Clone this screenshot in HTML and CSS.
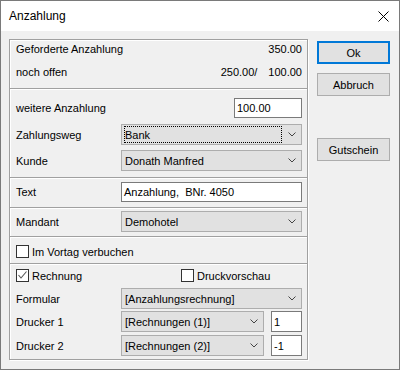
FILE: index.html
```html
<!DOCTYPE html>
<html lang="de">
<head>
    <meta charset="UTF-8">
    <title>Anzahlung</title>
    <link rel="stylesheet" href="styles.css">
</head>
<body>
    <div class="window">
        <div class="titlebar">
            <span class="title">Anzahlung</span>
            <svg class="close" width="11" height="11" viewBox="0 0 11 11">
                <path d="M0.5 0.5 L10.5 10.5 M10.5 0.5 L0.5 10.5" stroke="#000" stroke-width="1" fill="none"/>
            </svg>
        </div>
        <div class="body">
            <div class="group">
                <div class="section s-summary">
                    <div class="row r-info">
                        <span>Geforderte Anzahlung</span>
                        <span class="amount">350.00</span>
                    </div>
                    <div class="row r-info">
                        <span>noch offen</span>
                        <span class="amounts"><span>250.00/</span><span>100.00</span></span>
                    </div>
                </div>
                <div class="section s-payment">
                    <div class="row r-input">
                        <span class="label">weitere Anzahlung</span>
                        <div class="field field-amount">100.00</div>
                    </div>
                    <div class="row r-combo">
                        <span class="label">Zahlungsweg</span>
                        <div class="combo">
                            <span class="focus">Bank</span>
                            <svg class="chevron" width="8" height="5" viewBox="0 0 8 5"><polyline points="0.5,0.5 4,4 7.5,0.5" fill="none" stroke="#444" stroke-width="1"/></svg>
                        </div>
                    </div>
                    <div class="row r-combo">
                        <span class="label">Kunde</span>
                        <div class="combo">
                            <span>Donath Manfred</span>
                            <svg class="chevron" width="8" height="5" viewBox="0 0 8 5"><polyline points="0.5,0.5 4,4 7.5,0.5" fill="none" stroke="#444" stroke-width="1"/></svg>
                        </div>
                    </div>
                </div>
                <div class="section s-text">
                    <div class="row r-input">
                        <span class="label">Text</span>
                        <div class="field field-wide">Anzahlung,&nbsp; BNr. 4050</div>
                    </div>
                </div>
                <div class="section s-mandant">
                    <div class="row r-combo">
                        <span class="label">Mandant</span>
                        <div class="combo">
                            <span>Demohotel</span>
                            <svg class="chevron" width="8" height="5" viewBox="0 0 8 5"><polyline points="0.5,0.5 4,4 7.5,0.5" fill="none" stroke="#444" stroke-width="1"/></svg>
                        </div>
                    </div>
                </div>
                <div class="section s-vortag">
                    <div class="row r-check">
                        <span class="checkbox"></span>
                        <span>Im Vortag verbuchen</span>
                    </div>
                </div>
                <div class="section s-print">
                    <div class="row r-check">
                        <div class="check-item check-first">
                            <span class="checkbox">
                                <svg width="11" height="11" viewBox="0 0 11 11"><polyline points="1.5,5 4,8 9.5,1.5" fill="none" stroke="#555" stroke-width="1.1"/></svg>
                            </span>
                            <span>Rechnung</span>
                        </div>
                        <div class="check-item">
                            <span class="checkbox"></span>
                            <span>Druckvorschau</span>
                        </div>
                    </div>
                    <div class="row r-combo">
                        <span class="label">Formular</span>
                        <div class="combo">
                            <span>[Anzahlungsrechnung]</span>
                            <svg class="chevron" width="8" height="5" viewBox="0 0 8 5"><polyline points="0.5,0.5 4,4 7.5,0.5" fill="none" stroke="#444" stroke-width="1"/></svg>
                        </div>
                    </div>
                    <div class="row r-combo r-printer">
                        <span class="label">Drucker 1</span>
                        <div class="combo combo-short">
                            <span>[Rechnungen (1)]</span>
                            <svg class="chevron" width="8" height="5" viewBox="0 0 8 5"><polyline points="0.5,0.5 4,4 7.5,0.5" fill="none" stroke="#444" stroke-width="1"/></svg>
                        </div>
                        <div class="field field-copies">1</div>
                    </div>
                    <div class="row r-combo r-printer r-last">
                        <span class="label">Drucker 2</span>
                        <div class="combo combo-short">
                            <span>[Rechnungen (2)]</span>
                            <svg class="chevron" width="8" height="5" viewBox="0 0 8 5"><polyline points="0.5,0.5 4,4 7.5,0.5" fill="none" stroke="#444" stroke-width="1"/></svg>
                        </div>
                        <div class="field field-copies">-1</div>
                    </div>
                </div>
            </div>
            <div class="buttons">
                <div class="button button-default">Ok</div>
                <div class="button">Abbruch</div>
                <div class="button button-voucher">Gutschein</div>
            </div>
        </div>
    </div>
</body>
</html>
```

FILE: styles.css
```css
* {
    box-sizing: border-box;
}

body {
    margin: 0;
    font-family: "Liberation Sans", Arial, sans-serif;
    font-size: 11px;
    color: #000;
    background-color: #f0f0f0;
}

.window {
    width: 400px;
    height: 370px;
    border: 1px solid #7a7a7a;
    background-color: #f0f0f0;
    display: flex;
    flex-direction: column;
}

.titlebar {
    height: 30px;
    background-color: #fff;
    display: flex;
    align-items: center;
    justify-content: space-between;
    padding: 0 10px 0 8px;
}

.title {
    font-size: 12px;
}

.close {
    display: block;
}

.body {
    display: flex;
    padding: 8px 0 0 8px;
    gap: 9px;
}

.group {
    width: 299px;
    border: 1px solid #a0a0a0;
    box-shadow: 1px 1px 0 #fff, inset 1px 1px 0 #fff;
}

.section {
    padding: 0 5px 0 6px;
    display: flex;
    flex-direction: column;
}

.section + .section {
    border-top: 1px solid #a0a0a0;
    box-shadow: inset 0 1px 0 #fff;
}

.row {
    display: flex;
    align-items: center;
}

.label {
    width: 105px;
    flex-shrink: 0;
}

/* Abschnitte */
.s-summary {
    padding-bottom: 7px;
    gap: 5px;
}

.r-info {
    height: 18px;
    justify-content: space-between;
}

.amounts {
    display: flex;
    gap: 11px;
}

.s-payment {
    padding-top: 9px;
    padding-bottom: 6px;
}

.s-payment .r-combo {
    margin-top: 6px;
}

.s-payment .r-combo + .r-combo {
    margin-top: 5px;
}

.s-text {
    padding-top: 4px;
    padding-bottom: 5px;
}

.s-mandant {
    padding-top: 3px;
    padding-bottom: 4px;
}

.s-vortag {
    padding-top: 8px;
    padding-bottom: 5px;
}

.s-print {
    padding-top: 5px;
    padding-bottom: 3px;
}

.s-print .r-combo {
    margin-top: 2px;
}

.s-print .r-check + .r-combo {
    margin-top: 6px;
}

.s-print .r-last {
    margin-top: 3px;
}

/* Controls */
.r-input {
    height: 20px;
}

.r-combo {
    height: 21px;
}

.field {
    height: 20px;
    background-color: #fff;
    border: 1px solid #7a7a7a;
    padding-left: 2px;
    display: flex;
    align-items: center;
    white-space: pre;
}

.field-amount {
    width: 68px;
    margin-left: auto;
}

.field-wide {
    flex: 1;
}

.field-copies {
    width: 31px;
    height: 21px;
    margin-left: 7px;
}

.combo {
    flex: 1;
    height: 21px;
    background-color: #e1e1e1;
    border: 1px solid #adadad;
    padding-left: 3px;
    display: flex;
    align-items: center;
}

.combo-short {
    flex: none;
    width: 143px;
}

.combo .focus {
    width: 158px;
    height: 17px;
    margin-left: -1px;
    border: 1px dotted #000;
    display: flex;
    align-items: center;
}

.chevron {
    margin-left: auto;
    margin-right: 5px;
    display: block;
}

.r-check {
    height: 13px;
    gap: 3px;
}

.check-item {
    display: flex;
    flex: none;
    align-items: center;
    gap: 3px;
}

.check-first {
    width: 162px;
}

.checkbox {
    width: 13px;
    height: 13px;
    flex: none;
    background-color: #fff;
    border: 1px solid #333;
    display: flex;
    align-items: center;
    justify-content: center;
}

.checkbox svg {
    display: block;
}

/* Buttons */
.buttons {
    display: flex;
    flex-direction: column;
    margin-top: 2px;
    gap: 9px;
}

.button {
    width: 73px;
    height: 23px;
    background-color: #e1e1e1;
    border: 1px solid #adadad;
    display: flex;
    align-items: center;
    justify-content: center;
}

.button-default {
    border: 2px solid #0078d7;
}

.button-voucher {
    margin-top: 33px;
}
```
